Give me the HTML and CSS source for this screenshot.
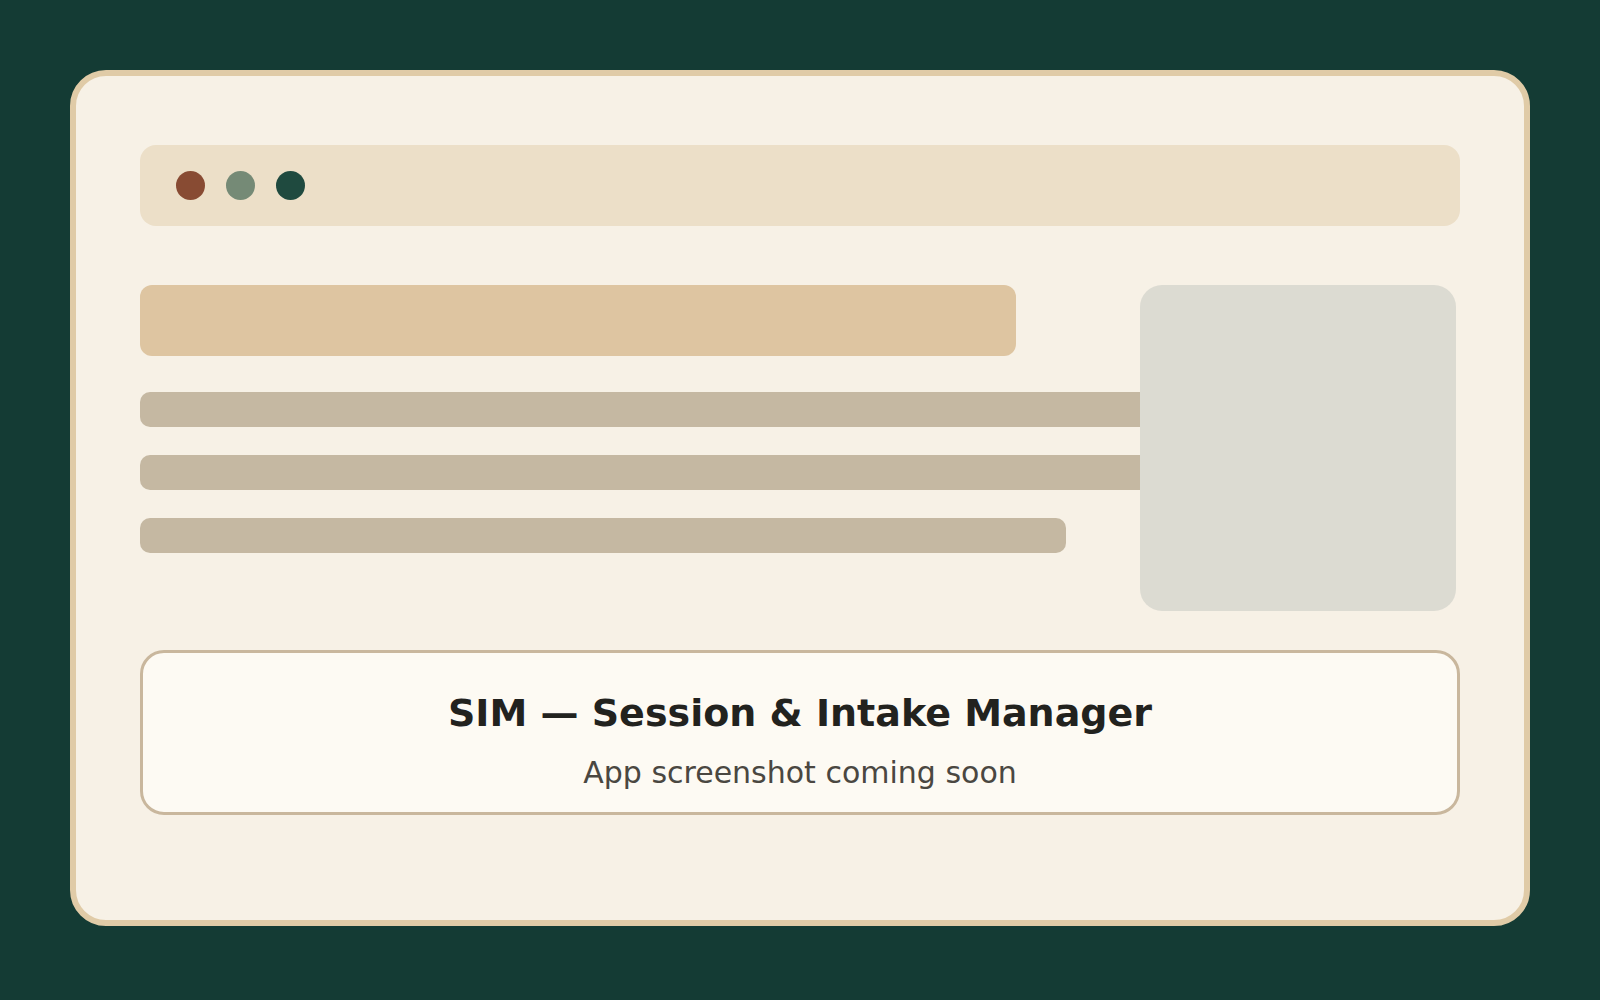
FILE: index.html
```html
<!DOCTYPE html>
<html lang="en">
<head>
<meta charset="utf-8">
<title>SIM — Session &amp; Intake Manager</title>
<link rel="stylesheet" href="styles.css">
</head>
<body>
<div class="card">
  <div class="titlebar">
    <span class="dot dot-red"></span>
    <span class="dot dot-sage"></span>
    <span class="dot dot-green"></span>
  </div>
  <div class="content">
    <div class="text-stack">
      <div class="heading-bar"></div>
      <div class="line"></div>
      <div class="line"></div>
      <div class="line line-short"></div>
    </div>
    <div class="preview"></div>
  </div>
  <div class="caption">
    <h1 class="caption-title">SIM — Session &amp; Intake Manager</h1>
    <p class="caption-sub">App screenshot coming soon</p>
  </div>
</div>
</body>
</html>
```

FILE: styles.css
```css
* { box-sizing: border-box; }

html, body {
  margin: 0;
  padding: 0;
}

body {
  width: 1600px;
  height: 1000px;
  background: #143b34;
  padding: 70px;
  font-family: "DejaVu Sans", "Liberation Sans", sans-serif;
}

.card {
  width: 1460px;
  height: 856px;
  background: #f7f1e6;
  border: 6px solid #e0cba7;
  border-radius: 36px;
  padding: 69px 64px 0 64px;
  display: flex;
  flex-direction: column;
}

.titlebar {
  height: 81px;
  background: #ecdfc8;
  border-radius: 16px;
  display: flex;
  align-items: center;
  gap: 21px;
  padding-left: 36px;
  flex-shrink: 0;
}

.dot {
  width: 29px;
  height: 29px;
  border-radius: 50%;
  display: block;
}
.dot-red { background: #884b33; }
.dot-sage { background: #758a76; }
.dot-green { background: #1f4a3f; }

.content {
  margin-top: 59px;
  height: 326px;
  display: grid;
  grid-template-columns: 1000px 316px 4px;
  grid-template-rows: 326px;
  flex-shrink: 0;
}

.text-stack {
  grid-column: 1 / 3;
  grid-row: 1;
  display: flex;
  flex-direction: column;
  gap: 28px;
}

.heading-bar {
  width: 876px;
  height: 71px;
  background: #dec5a1;
  border-radius: 12px;
  margin-bottom: 8px;
}

.line {
  height: 35px;
  background: #c5b8a2;
  border-radius: 10px;
}

.line-short {
  width: 926px;
}

.preview {
  grid-column: 2;
  grid-row: 1;
  background: #dcdbd2;
  border-radius: 22px;
  position: relative;
  z-index: 1;
}

.caption {
  margin-top: 39px;
  height: 165px;
  background: #fdfaf3;
  border: 3px solid #c9b79d;
  border-radius: 24px;
  text-align: center;
  padding-top: 37px;
  flex-shrink: 0;
}

.caption-title {
  margin: 0;
  font-size: 38px;
  line-height: 46px;
  font-weight: bold;
  color: #22221e;
}

.caption-sub {
  margin: 19px 0 0 0;
  font-size: 30px;
  line-height: 36px;
  color: #4a4741;
}
```
